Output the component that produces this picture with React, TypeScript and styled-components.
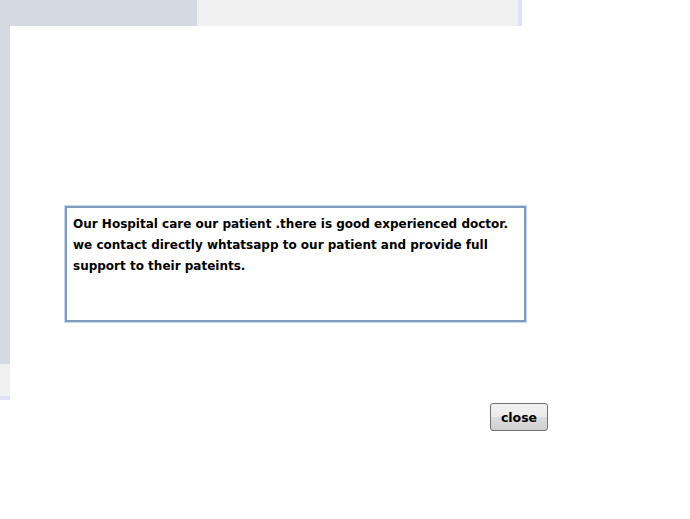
import styled, { createGlobalStyle } from 'styled-components'

const GlobalStyle = createGlobalStyle`
    html, body {
        margin: 0;
        padding: 0;
        background: #ffffff;
    }
    body {
        font-family: "DejaVu Sans", Tahoma, sans-serif;
    }
`

const aboutText =
    'Our Hospital care our patient .there is good experienced doctor.\nwe contact directly whtatsapp to our patient and provide full\nsupport to their pateints.'

export default function App() {
    return (
        <>
            <GlobalStyle />
            <Screen>
                <BackApp>
                    <TopBar>
                        <TopBarLeft />
                        <TopBarRight />
                    </TopBar>
                    <SideColumn>
                        <SideTop />
                        <SideBottom />
                    </SideColumn>
                </BackApp>
                <Modal>
                    <AboutBox readOnly value={aboutText} />
                    <Footer>
                        <CloseButton>close</CloseButton>
                    </Footer>
                </Modal>
            </Screen>
        </>
    )
}

const Screen = styled.div`
    position: relative;
    width: 690px;
    height: 519px;
    overflow: hidden;
    background: #ffffff;
`
const BackApp = styled.div`
    width: 518px;
    height: 396px;
    border-right: 4px solid #e0e0fc;
    border-bottom: 4px solid #e0e0fc;
    display: grid;
    grid-template-rows: 26px 1fr;
`
const TopBar = styled.div`
    display: flex;
`
const TopBarLeft = styled.div`
    width: 197px;
    background: #d5d9e1;
`
const TopBarRight = styled.div`
    flex: 1;
    background: #f0f0f0;
`
const SideColumn = styled.div`
    width: 10px;
    display: flex;
    flex-direction: column;
`
const SideTop = styled.div`
    height: 338px;
    background: #d5d9e1;
`
const SideBottom = styled.div`
    flex: 1;
    background: #f0f0f0;
`
const Modal = styled.div`
    position: absolute;
    left: 10px;
    top: 26px;
    right: 0;
    bottom: 0;
    background: #ffffff;
    display: flex;
    flex-direction: column;
    padding: 180px 0 0 55px;
    box-sizing: border-box;
`
const AboutBox = styled.textarea`
    width: 461px;
    height: 116px;
    box-sizing: border-box;
    margin: 0;
    padding: 6px 0 6px 6px;
    border: 2px solid #7f9cbf;
    box-shadow: 0 0 0 1px #c3d6ee;
    outline: none;
    resize: none;
    overflow: hidden;
    white-space: pre;
    font-family: "DejaVu Sans", Tahoma, sans-serif;
    font-weight: bold;
    font-size: 12px;
    line-height: 21px;
    color: #000000;
    background: #ffffff;
`
const Footer = styled.div`
    display: flex;
    padding: 81px 0 0 425px;
`
const CloseButton = styled.button`
    width: 58px;
    height: 28px;
    box-sizing: border-box;
    border: 1px solid #707070;
    border-radius: 3px;
    background: linear-gradient(#f2f2f2 0%, #ebebeb 50%, #dddddd 51%, #cfcfcf 100%);
    font-family: "DejaVu Sans", Tahoma, sans-serif;
    font-weight: bold;
    font-size: 12.5px;
    color: #000000;
    padding: 0;
    cursor: pointer;
`
